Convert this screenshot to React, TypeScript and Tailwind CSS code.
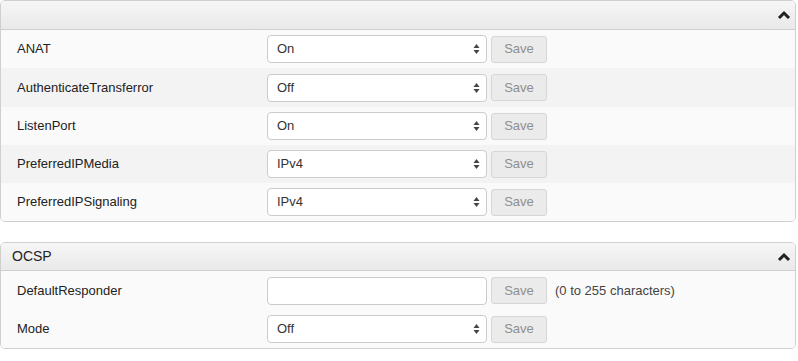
import React from "react";

const font = { fontFamily: '"Liberation Sans", Arial, sans-serif' };

function Caret() {
  return (
    <svg width="14" height="10" viewBox="0 0 14 10" className="text-[#222]">
      <path d="M2 8 L7 3 L12 8" fill="none" stroke="currentColor" strokeWidth="3" />
    </svg>
  );
}

function Arrows() {
  return (
    <svg width="7" height="12" viewBox="0 0 7 12" className="absolute right-[6px] top-1/2 -translate-y-1/2">
      <path d="M3.5 1 L6.5 5 L0.5 5 Z" fill="#444" />
      <path d="M3.5 11 L6.5 7 L0.5 7 Z" fill="#444" />
    </svg>
  );
}

function SelectBox({ value }: { value: string }) {
  return (
    <div className="relative w-[220px] h-[28px] bg-white border border-[#ccc] rounded-[4px] flex items-center pl-[9px] text-[13px] text-[#333]">
      {value}
      <Arrows />
    </div>
  );
}

function SaveBtn() {
  return (
    <div className="w-[56px] h-[27px] ml-[4px] bg-[#ebebeb] border border-[#d6d6d6] rounded-[3px] flex items-center justify-center text-[13px] text-[#8f8f8f]">
      Save
    </div>
  );
}

function Row({ label, value, striped, input, note, h = 38 }: { label: string; value?: string; striped?: boolean; input?: boolean; note?: string; h?: number }) {
  return (
    <div className={`flex items-center ${striped ? "bg-[#f3f3f3]" : "bg-[#fafafa]"}`} style={{ height: h }}>
      <div className="w-[266px] pl-[16px] text-[13px] text-[#222]">{label}</div>
      {input ? (
        <div className="w-[220px] h-[28px] bg-white border border-[#ccc] rounded-[4px]" />
      ) : (
        <SelectBox value={value || ""} />
      )}
      <SaveBtn />
      {note && <div className="ml-[8px] text-[13px] text-[#444]">{note}</div>}
    </div>
  );
}

export default function App() {
  return (
    <div className="w-[798px] h-[361px] bg-white pr-[2px]" style={font}>
      <div className="border border-[#cfcfcf] rounded-[5px] overflow-hidden">
        <div className="h-[29px] bg-gradient-to-b from-[#f6f6f6] to-[#e9e9e9] border-b border-[#cfcfcf] flex items-center justify-end pr-[4px]">
          <Caret />
        </div>
        <Row label="ANAT" value="On" h={38} />
        <Row label="AuthenticateTransferror" value="Off" striped h={39} />
        <Row label="ListenPort" value="On" h={38} />
        <Row label="PreferredIPMedia" value="IPv4" striped h={38} />
        <Row label="PreferredIPSignaling" value="IPv4" h={38} />
      </div>
      <div className="h-[20px]" />
      <div className="border border-[#cfcfcf] rounded-[5px] overflow-hidden">
        <div className="h-[28px] bg-gradient-to-b from-[#f6f6f6] to-[#e9e9e9] border-b border-[#cfcfcf] flex items-center justify-between pl-[11px] pr-[4px]">
          <span className="text-[14px] text-[#222]">OCSP</span>
          <Caret />
        </div>
        <Row label="DefaultResponder" input note="(0 to 255 characters)" h={39} />
        <Row label="Mode" value="Off" h={38} />
      </div>
    </div>
  );
}
